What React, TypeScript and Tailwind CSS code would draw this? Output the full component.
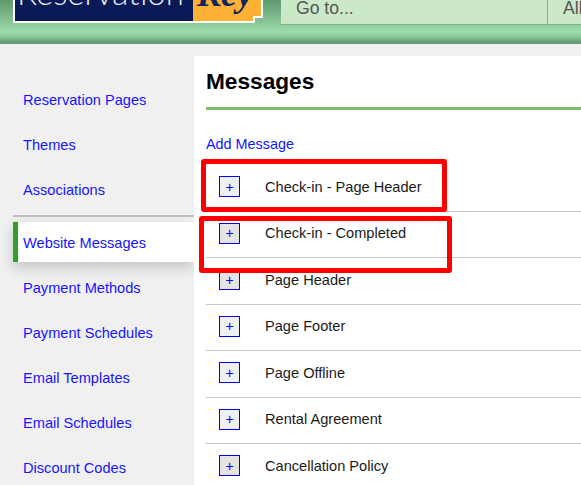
const navTop = ["Reservation Pages", "Themes", "Associations"];
const navBottom = ["Payment Methods", "Payment Schedules", "Email Templates", "Email Schedules", "Discount Codes"];
const messages = [
  { name: "Check-in - Page Header", blue: true },
  { name: "Check-in - Completed" },
  { name: "Page Header" },
  { name: "Page Footer", blue: true },
  { name: "Page Offline", blue: true },
  { name: "Rental Agreement", blue: true },
  { name: "Cancellation Policy" },
];

function Logo() {
  return (
    <div className="relative w-[250px] h-[23px] shrink-0">
      <div className="w-full h-full flex bg-[#0a1a57] border-[2px] border-t-0 border-white overflow-hidden">
        <div className="w-[178px] h-full overflow-hidden">
          <div className="mt-[-26px] ml-[2px] text-[33px] leading-[36px] font-light text-[#e8eaf2] font-['Lato',sans-serif]">Reservation</div>
        </div>
        <div className="flex-1 bg-[#ffb136] overflow-hidden">
          <div className="mt-[-24px] ml-[4px] text-[36px] leading-[36px] italic font-bold text-[#14235f] font-['Liberation_Serif',serif]">Key</div>
        </div>
      </div>
      {/* stepped lower right corner of the logo */}
      <div className="absolute right-0 bottom-0 w-[10px] h-[7px] bg-[#84c092] border-t-[2px] border-l-[2px] border-white" />
    </div>
  );
}

function Header() {
  return (
    <div className="h-[44px] flex items-start pl-[13px] bg-[linear-gradient(#5f9a70_0px,#7eb98c_16px,#9cdcaa_32px,#8cc79a_37px,#659a72_42px,#659a72_44px)]">
      <Logo />
      <div className="ml-[18px] w-[266px] h-[25px] bg-[#cbe9c7] border-b border-[#7fb48a] text-[#555] text-[17.6px] leading-[16px] pl-[15px] overflow-hidden">Go to...</div>
      <div className="flex-1 h-[25px] bg-[#cbe9c7] border-b border-l border-[#7fb48a] text-[#555] text-[17.6px] leading-[16px] pl-[15px] overflow-hidden">All</div>
    </div>
  );
}

function NavLink({ label }: { label: string }) {
  return <div className="h-[45px] pl-[23px] flex items-center text-[14.6px] text-[#1515ff]">{label}</div>;
}

function Sidebar() {
  return (
    <div className="w-[194px] shrink-0 pt-[34px]">
      {navTop.map((n) => <NavLink key={n} label={n} />)}
      <div className="ml-[13px] mt-[2px] h-[2px] bg-[#c0c0c0]" />
      <div className="ml-[13px] mt-[5px] h-[40px] flex items-center pt-[3px] bg-white border-l-[5px] border-[#2f9e2a] pl-[5px] text-[14.6px] text-[#1515ff] shadow-[0_6px_14px_rgba(0,0,0,0.18)]">Website Messages</div>
      <div className="mt-[4px]">
        {navBottom.map((n) => <NavLink key={n} label={n} />)}
      </div>
    </div>
  );
}

function MessageRow({ name, blue }: { name: string; blue?: boolean }) {
  return (
    <div className="h-[46.5px] flex items-center border-b border-[#c8c8c8] pl-[13px]">
      <div className={`w-[21px] h-[21px] mb-[2px] flex items-center justify-center border border-[#0000ff] text-[#0000ff] text-[14px] leading-none ${blue ? "bg-[#eef0f4]" : "bg-[#e4e4e4]"}`}>+</div>
      <div className="ml-[25px] mb-[0.5px] text-[14.6px] text-[#1a1a1a]">{name}</div>
    </div>
  );
}

export default function App() {
  return (
    <div className="relative w-[581px] h-[485px] overflow-hidden bg-[#f0f0f0] font-['Liberation_Sans',sans-serif]">
      <Header />
      <div className="flex">
        <Sidebar />
        <div className="flex-1 mt-[12px] bg-white h-[429px] overflow-hidden">
          <div className="ml-[12px] pt-[12px] h-[39px] border-b-[3px] border-[#82b966] box-content text-[22.67px] leading-[26px] font-bold text-black">
            Messages
          </div>
          <div className="ml-[12px] mt-[25px] h-[18px] text-[14.4px] leading-[18px] text-[#1515ff]">Add Message</div>
          <div className="ml-[12px] mt-[12px]">
            {messages.map((m) => <MessageRow key={m.name} name={m.name} blue={m.blue} />)}
          </div>
        </div>
      </div>
      {/* red annotation boxes drawn over the list */}
      <div className="absolute left-[201px] top-[159px] w-[246px] h-[53px] border-[5px] border-[#ff0000] rounded-[3px]" />
      <div className="absolute left-[199px] top-[216px] w-[253px] h-[57px] border-[5px] border-[#ff0000] rounded-[3px]" />
    </div>
  );
}
